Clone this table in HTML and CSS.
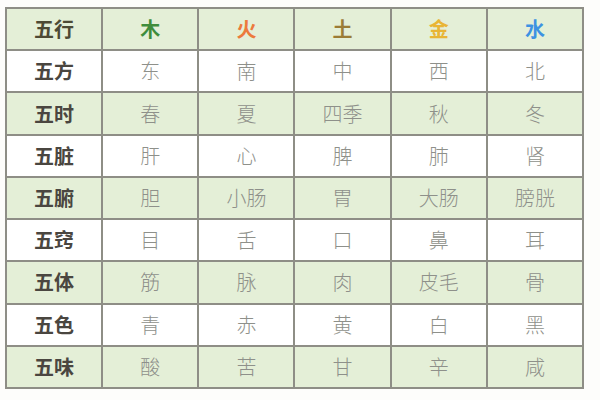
FILE: index.html
```html
<!DOCTYPE html>
<html lang="zh">
<head>
<meta charset="utf-8">
<link rel="stylesheet" href="styles.css">
</head>
<body>
<table class="wx">
  <tr class="g head">
    <th>五行</th>
    <td class="mu">木</td>
    <td class="huo">火</td>
    <td class="tu">土</td>
    <td class="jin">金</td>
    <td class="shui">水</td>
  </tr>
  <tr><th>五方</th><td>东</td><td>南</td><td>中</td><td>西</td><td>北</td></tr>
  <tr class="g"><th>五时</th><td>春</td><td>夏</td><td>四季</td><td>秋</td><td>冬</td></tr>
  <tr><th>五脏</th><td>肝</td><td>心</td><td>脾</td><td>肺</td><td>肾</td></tr>
  <tr class="g"><th>五腑</th><td>胆</td><td>小肠</td><td>胃</td><td>大肠</td><td>膀胱</td></tr>
  <tr><th>五窍</th><td>目</td><td>舌</td><td>口</td><td>鼻</td><td>耳</td></tr>
  <tr class="g"><th>五体</th><td>筋</td><td>脉</td><td>肉</td><td>皮毛</td><td>骨</td></tr>
  <tr><th>五色</th><td>青</td><td>赤</td><td>黄</td><td>白</td><td>黑</td></tr>
  <tr class="g"><th>五味</th><td>酸</td><td>苦</td><td>甘</td><td>辛</td><td>咸</td></tr>
</table>
</body>
</html>
```

FILE: styles.css
```css
html, body {
  margin: 0;
  padding: 0;
  background: #fdfdfb;
}
body {
  padding: 7px 0 0 5px;
}
.wx {
  border-collapse: collapse;
  width: 579px;
  height: 382px;
  table-layout: fixed;
  font-family: "Noto Sans CJK SC", sans-serif;
}
.wx th, .wx td {
  border: 2px solid #8e8e86;
  text-align: center;
  vertical-align: middle;
  padding: 0;
  font-size: 20px;
  line-height: 1;
}
.wx th {
  font-weight: 700;
  color: #4a4640;
}
.wx td {
  font-weight: 300;
  color: #8e908a;
}
.wx tr {
  background: #ffffff;
}
.wx tr.g {
  background: #e4efd7;
}
.wx .head td {
  font-weight: 700;
}
.wx .head th { color: #4d4a35; }
.wx .mu { color: #3f8d3c; }
.wx .huo { color: #ec7a3c; }
.wx .tu { color: #9b7c36; }
.wx .jin { color: #e9b535; }
.wx .shui { color: #3d92e2; }
```
